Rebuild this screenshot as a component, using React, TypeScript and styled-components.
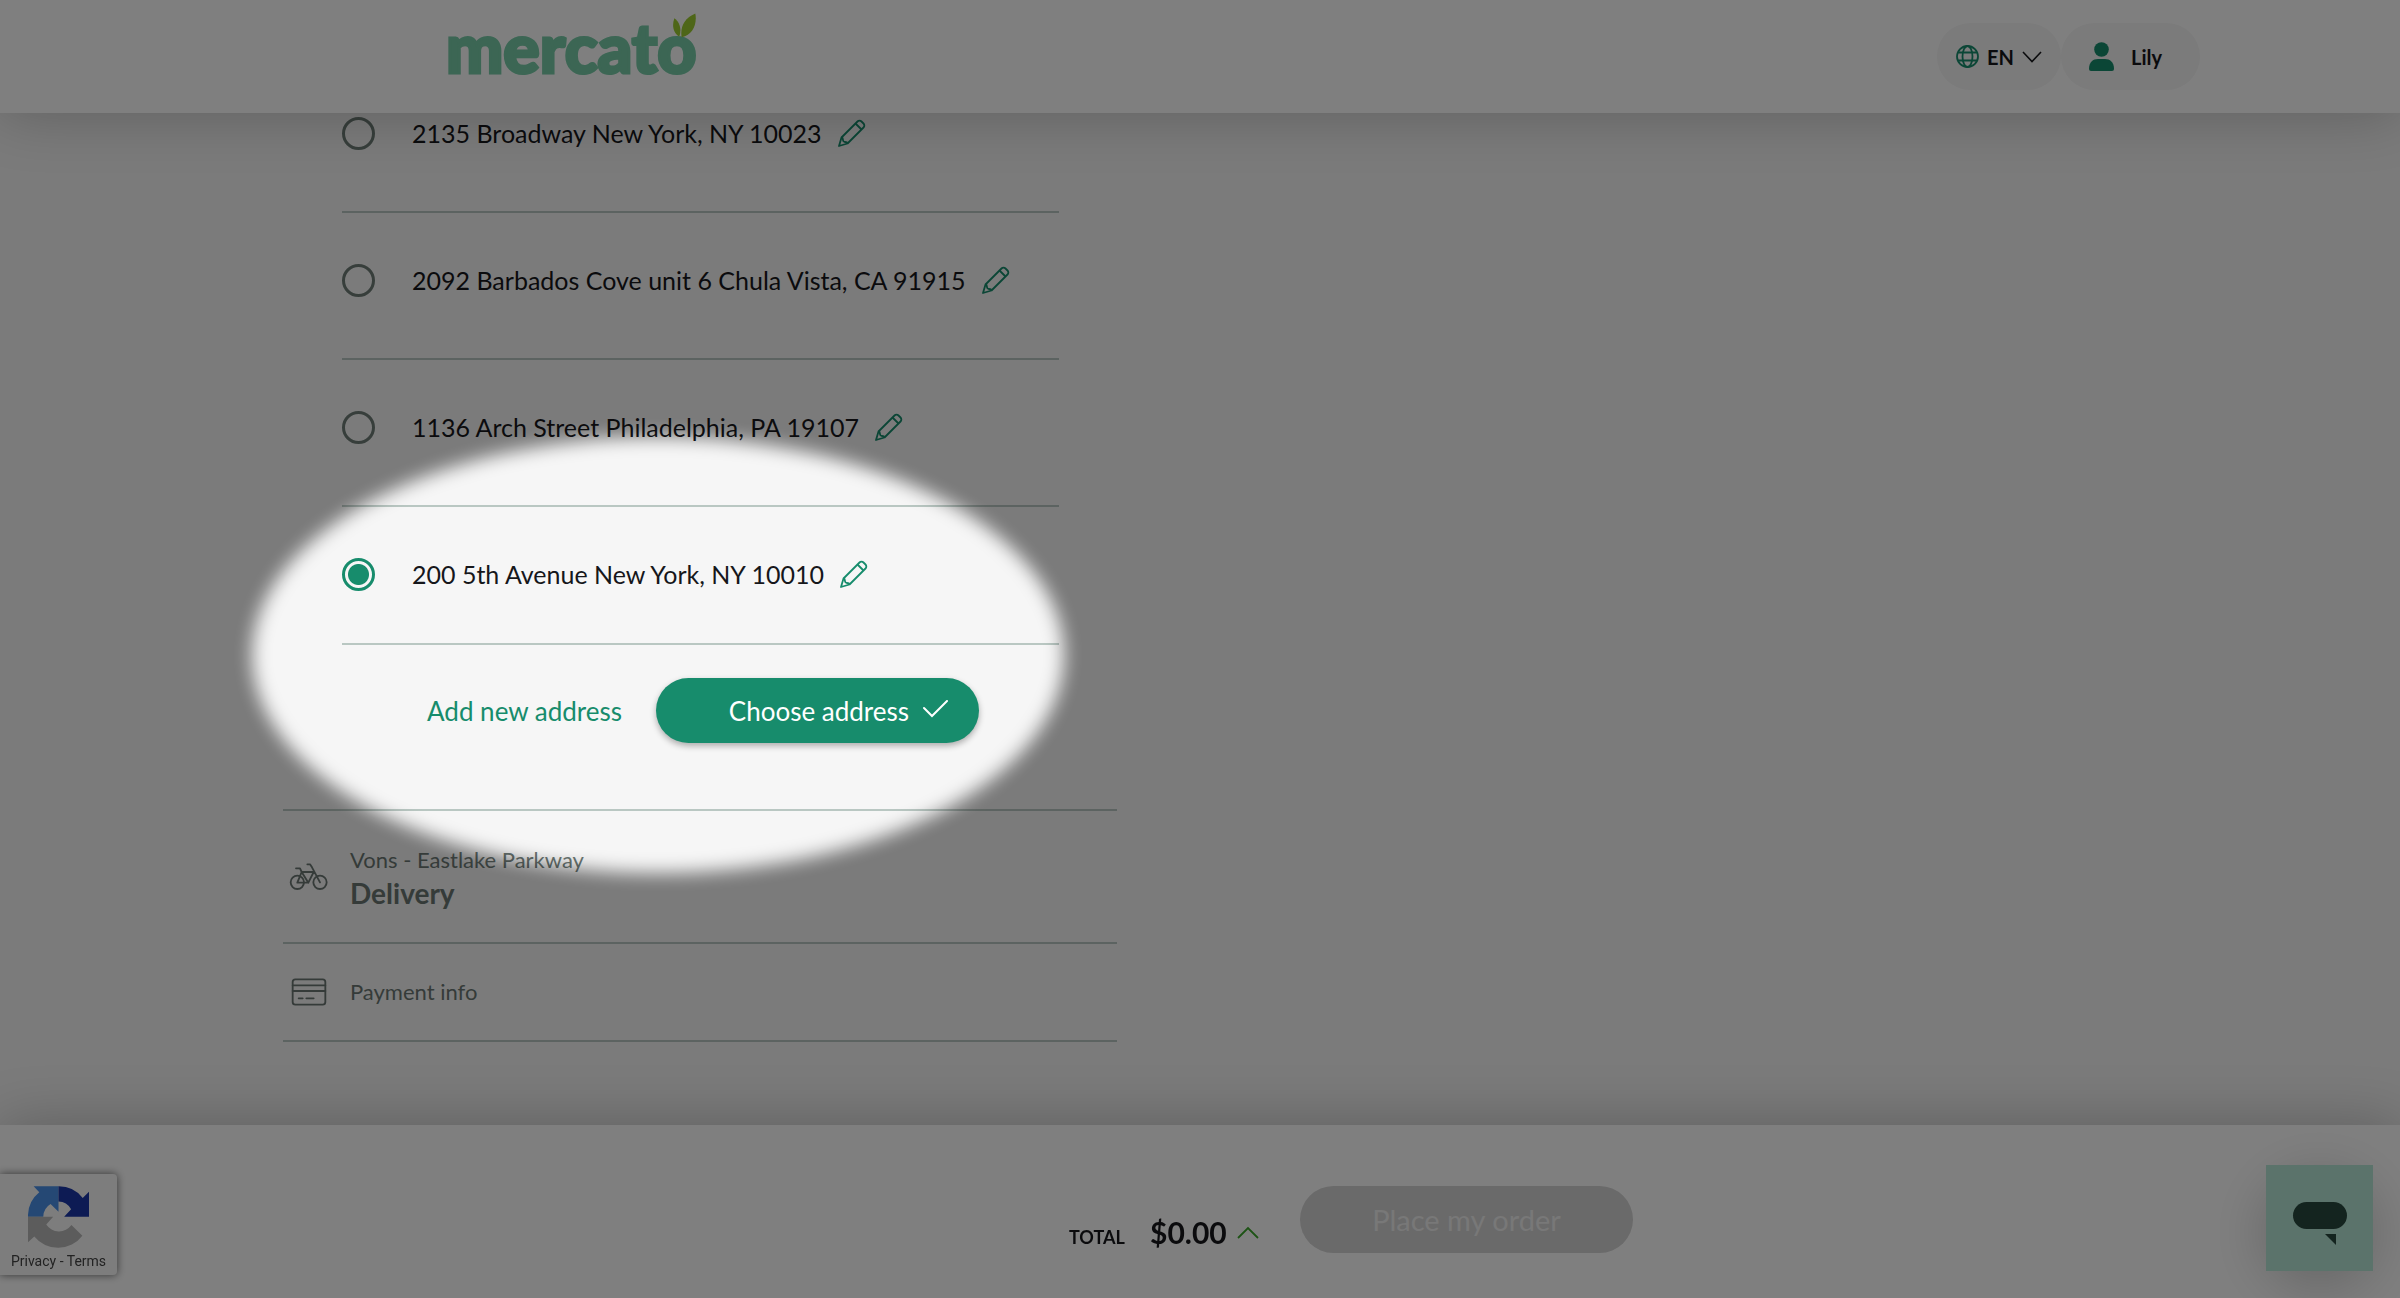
import React from 'react';
import styled, { createGlobalStyle } from 'styled-components';

const Global = createGlobalStyle`
  *, *::before, *::after { box-sizing: border-box; }
  body {
    margin: 0;
    background: #f6f6f6;
    color: #16171b;
    font-family: Lato, "Open Sans", sans-serif;
  }
  button { font: inherit; color: inherit; border: 0; background: none; padding: 0; cursor: pointer; }
  a { color: inherit; text-decoration: none; }
  svg { display: block; flex: none; }
`;

const green = '#178c6c';
const rule = '#b9c7c2';
const muted = '#6b7773';

const Header = styled.header`
  position: fixed;
  inset: 0 0 auto;
  z-index: 2;
  height: 113px;
  padding: 0 200px 0 446px;
  display: flex;
  justify-content: space-between;
  background: #fff;
  box-shadow: 0 0 60px rgba(0, 0, 0, 0.24);
`;

const Logo = styled.a`
  position: relative;
  height: 88px;
  font-size: 68px;
  line-height: 94px;
  font-weight: 900;
  color: #78cca8;
  -webkit-text-stroke: 3px #78cca8;
`;

const Leaves = styled.svg`
  position: absolute;
  top: 13px;
  right: 0;
`;

const HeaderActions = styled.nav`
  display: flex;
  align-items: center;
`;

const Pill = styled.button<{ $gap: number; $pad: string }>`
  height: 67px;
  padding: ${(p) => p.$pad};
  display: flex;
  align-items: center;
  gap: ${(p) => p.$gap}px;
  border-radius: 34px;
  background: #f6f6f6;
  font-size: 20px;
  font-weight: 700;
`;

const Main = styled.main`
  width: 834px;
  max-width: 100%;
  margin: 0 0 0 283px;
  padding: 66px 0 256px;
`;

const Addresses = styled.form`
  padding: 0 58px 66px 59px;
  border-bottom: 2px solid ${rule};
`;

const AddressList = styled.ul`
  margin: 0;
  padding: 0;
  list-style: none;
`;

const AddressRow = styled.li`
  height: 147px;
  padding-top: 50px;
  display: flex;
  align-items: flex-start;
  border-bottom: 2px solid ${rule};
  &:last-child { height: 138px; }
`;

const AddressLabel = styled.label`
  display: flex;
  align-items: center;
  gap: 37px;
  font-size: 25px;
  line-height: 34px;
  white-space: nowrap;
`;

const Radio = styled.input`
  appearance: none;
  flex: none;
  width: 33px;
  height: 33px;
  margin: 0;
  border: 3px solid #6e7d77;
  border-radius: 50%;
  &:checked {
    border-color: ${green};
    background: radial-gradient(circle, ${green} 10px, transparent 11px);
  }
`;

const EditButton = styled.button`
  height: 34px;
  margin-left: 16px;
  color: ${green};
`;

const Actions = styled.div`
  padding: 33px 80px 0 0;
  display: flex;
  justify-content: flex-end;
  align-items: center;
  gap: 34px;
  font-size: 26px;
`;

const TextButton = styled.button`
  color: ${green};
`;

const PrimaryButton = styled.button`
  width: 323px;
  height: 65px;
  padding-right: 31px;
  display: flex;
  align-items: center;
  justify-content: flex-end;
  gap: 14px;
  border-radius: 33px;
  background: ${green};
  color: #fff;
  box-shadow: 0 3px 6px rgba(0, 0, 0, 0.3);
`;

const Step = styled.section<{ $height: number }>`
  height: ${(p) => p.$height}px;
  padding-left: 6px;
  display: flex;
  align-items: center;
  gap: 21px;
  border-bottom: 2px solid ${rule};
  color: ${muted};
`;

const StepText = styled.div`
  display: flex;
  flex-direction: column;
`;

const StepCaption = styled.span`
  font-size: 22px;
  line-height: 32px;
`;

const StepTitle = styled.strong`
  font-size: 28px;
  line-height: 34px;
`;

const Footer = styled.footer`
  position: fixed;
  inset: auto 0 0;
  z-index: 2;
  height: 173px;
  padding: 61px 0 0 302px;
  display: flex;
  justify-content: center;
  align-items: flex-start;
  gap: 41px;
  background: #fff;
  box-shadow: 0 0 60px rgba(0, 0, 0, 0.24);
`;

const Total = styled.button`
  padding-top: 28px;
  display: flex;
  align-items: baseline;
  line-height: 36px;
  font-weight: 700;
`;

const TotalLabel = styled.span`
  width: 81px;
  text-align: left;
  font-size: 18px;
`;

const Amount = styled.span`
  width: 87px;
  text-align: left;
  font-size: 30px;
`;

const OrderButton = styled.button`
  width: 333px;
  height: 67px;
  border-radius: 34px;
  background: #d4d4d4;
  color: #f0f0f0;
  font-size: 29px;
`;

const Captcha = styled.aside`
  position: fixed;
  left: 0;
  bottom: 23px;
  z-index: 3;
  width: 117px;
  height: 101px;
  padding-top: 12px;
  display: flex;
  flex-direction: column;
  align-items: center;
  gap: 5px;
  border-radius: 0 4px 4px 0;
  background: #fbfbfb;
  box-shadow: 0 0 8px rgba(0, 0, 0, 0.6);
  font: 14px/16px Roboto, sans-serif;
  color: #444;
  white-space: nowrap;
`;

const Chat = styled.div`
  position: fixed;
  right: 27px;
  bottom: 27px;
  z-index: 3;
  border-radius: 50%;
  box-shadow: 0 14px 56px 4px rgba(0, 0, 0, 0.2);
`;

const ChatButton = styled.button`
  display: block;
  background: #b6e6d6;
`;

const Dimmer = styled.div`
  position: fixed;
  inset: 0;
  z-index: 10;
  overflow: hidden;
  pointer-events: none;
`;

const Spotlight = styled.div`
  position: absolute;
  left: 252px;
  top: 437px;
  width: 812px;
  height: 436px;
  border-radius: 50%;
  box-shadow: 0 0 0 3000px rgba(0, 0, 0, 0.5);
  filter: blur(9px);
`;

const Pencil = () => (
  <svg width="28" height="28" viewBox="0 0 28 28" fill="none" stroke="currentColor" strokeWidth="1.8" strokeLinejoin="round">
    <path d="M1 27 3.500 18.500 19.500 2.500a2.800 2.800 0 0 1 4 0l2 2a2.800 2.800 0 0 1 0 4L9.500 24.500Z" />
    <path d="m17.500 4.500 6 6M3.500 18.500c1 .2 1.500 1 1.500 2.500 .2 1.500 1 2 2 2 1.500 0 2.300.5 2.500 1.500" />
  </svg>
);

const addresses = [
  '2135 Broadway New York, NY 10023',
  '2092 Barbados Cove unit 6 Chula Vista, CA 91915',
  '1136 Arch Street Philadelphia, PA 19107',
  '200 5th Avenue New York, NY 10010',
];

export default function App() {
  const [selected, setSelected] = React.useState(3);

  return (
    <>
      <Global />
      <Header>
        <Logo href="#">
          mercato
          <Leaves width="23" height="25" viewBox="819 39 69 74" fill="#9ccc30" aria-hidden="true">
            <path d="M823 54C838 64 846 86 838 109 820 100 815 76 823 54Z" />
            <path d="M886 40C892 72 878 105 845 111 840 82 852 54 886 40Z" />
          </Leaves>
        </Logo>
        <HeaderActions>
          <Pill $gap={8} $pad="0 19px">
            <svg width="23" height="23" viewBox="0 0 23 23" fill="none" stroke={green} strokeWidth="1.8">
              <circle cx="11.5" cy="11.5" r="10.500" />
              <ellipse cx="11.5" cy="11.5" rx="5" ry="10.500" />
              <path d="M2 7.500h19M2 15.500h19" />
            </svg>
            EN
            <svg width="20" height="12" viewBox="0 0 20 12" fill="none" stroke="currentColor" strokeWidth="1.6">
              <path d="m1 1 9 9.500L19 1" />
            </svg>
          </Pill>
          <Pill $gap={17} $pad="0 38px 0 28px">
            <svg width="25" height="29" viewBox="0 0 25 29" fill={green}>
              <circle cx="12.5" cy="7.500" r="7.300" />
              <path d="M0 27C0 20 4 17 9 17h7c5 0 9 3 9 10q0 2-2 2H2q-2 0-2-2Z" />
            </svg>
            Lily
          </Pill>
        </HeaderActions>
      </Header>

      <Main>
        <Addresses onSubmit={(e) => e.preventDefault()}>
          <AddressList>
            {addresses.map((address, i) => (
              <AddressRow key={address}>
                <AddressLabel>
                  <Radio type="radio" name="address" checked={selected === i} onChange={() => setSelected(i)} />
                  {address}
                </AddressLabel>
                <EditButton type="button" aria-label={`Edit ${address}`}>
                  <Pencil />
                </EditButton>
              </AddressRow>
            ))}
          </AddressList>
          <Actions>
            <TextButton type="button">Add new address</TextButton>
            <PrimaryButton type="submit">
              Choose address
              <svg width="25" height="22" viewBox="0 0 25 22" fill="none" stroke="currentColor" strokeWidth="2" strokeLinecap="round">
                <path d="m1 8 8 8L24 1" />
              </svg>
            </PrimaryButton>
          </Actions>
        </Addresses>
        <Step $height={133}>
          <svg width="40" height="28" viewBox="88 220 120 84" fill="none" stroke="currentColor" strokeWidth="5.500" strokeLinecap="round" strokeLinejoin="round">
            <circle cx="113" cy="278" r="20" />
            <circle cx="181" cy="278" r="20" />
            <path d="M143 224h8l6 9 24 45M109 236h12l5 11h36l-16 32h-33l13-32 20 32" />
          </svg>
          <StepText>
            <StepCaption>Vons - Eastlake Parkway</StepCaption>
            <StepTitle>Delivery</StepTitle>
          </StepText>
        </Step>
        <Step $height={98}>
          <svg width="40" height="28" viewBox="87 565 120 84" fill="none" stroke="currentColor" strokeWidth="5.500" strokeLinecap="round">
            <rect x="98" y="569" width="98" height="76" rx="8" />
            <path d="M98 587h98M98 604h98M116 626h12M139 626h22" />
          </svg>
          <StepCaption>Payment info</StepCaption>
        </Step>
      </Main>

      <Footer>
        <Total>
          <TotalLabel>TOTAL</TotalLabel>
          <Amount>$0.00</Amount>
          <svg width="22" height="18" viewBox="0 0 22 18" fill="none" stroke="#3aa62a" strokeWidth="1.800">
            <path d="m1 12L11 2l10 10" />
          </svg>
        </Total>
        <OrderButton>Place my order</OrderButton>
      </Footer>

      <Captcha>
        <svg width="61" height="62" viewBox="84 227 184 187" aria-hidden="true">
          <path fill="#4a90e8" d="M176 228H101L118 246A92 92 0 0 0 84 320H130A46 46 0 0 1 152 281L176 305Z" />
          <path fill="#1a37a8" d="M176 228A92 92 0 0 1 249 263L268 244V320H193L214 297A46 46 0 0 0 176 274Z" />
          <path fill="#b8b8b8" d="M84 320H160L139 343A46 46 0 0 0 215 345L248 377A92 92 0 0 1 103 379L84 397Z" />
        </svg>
        <span>
          <a href="#">Privacy</a> - <a href="#">Terms</a>
        </span>
      </Captcha>

      <Chat>
        <ChatButton aria-label="Open chat">
          <svg width="107" height="106" viewBox="0 0 107 106" fill="#28483e">
            <rect x="27" y="37" width="54" height="27" rx="13.500" />
            <path d="M59 69h11v11Z" />
          </svg>
        </ChatButton>
      </Chat>

      <Dimmer>
        <Spotlight />
      </Dimmer>
    </>
  );
}
